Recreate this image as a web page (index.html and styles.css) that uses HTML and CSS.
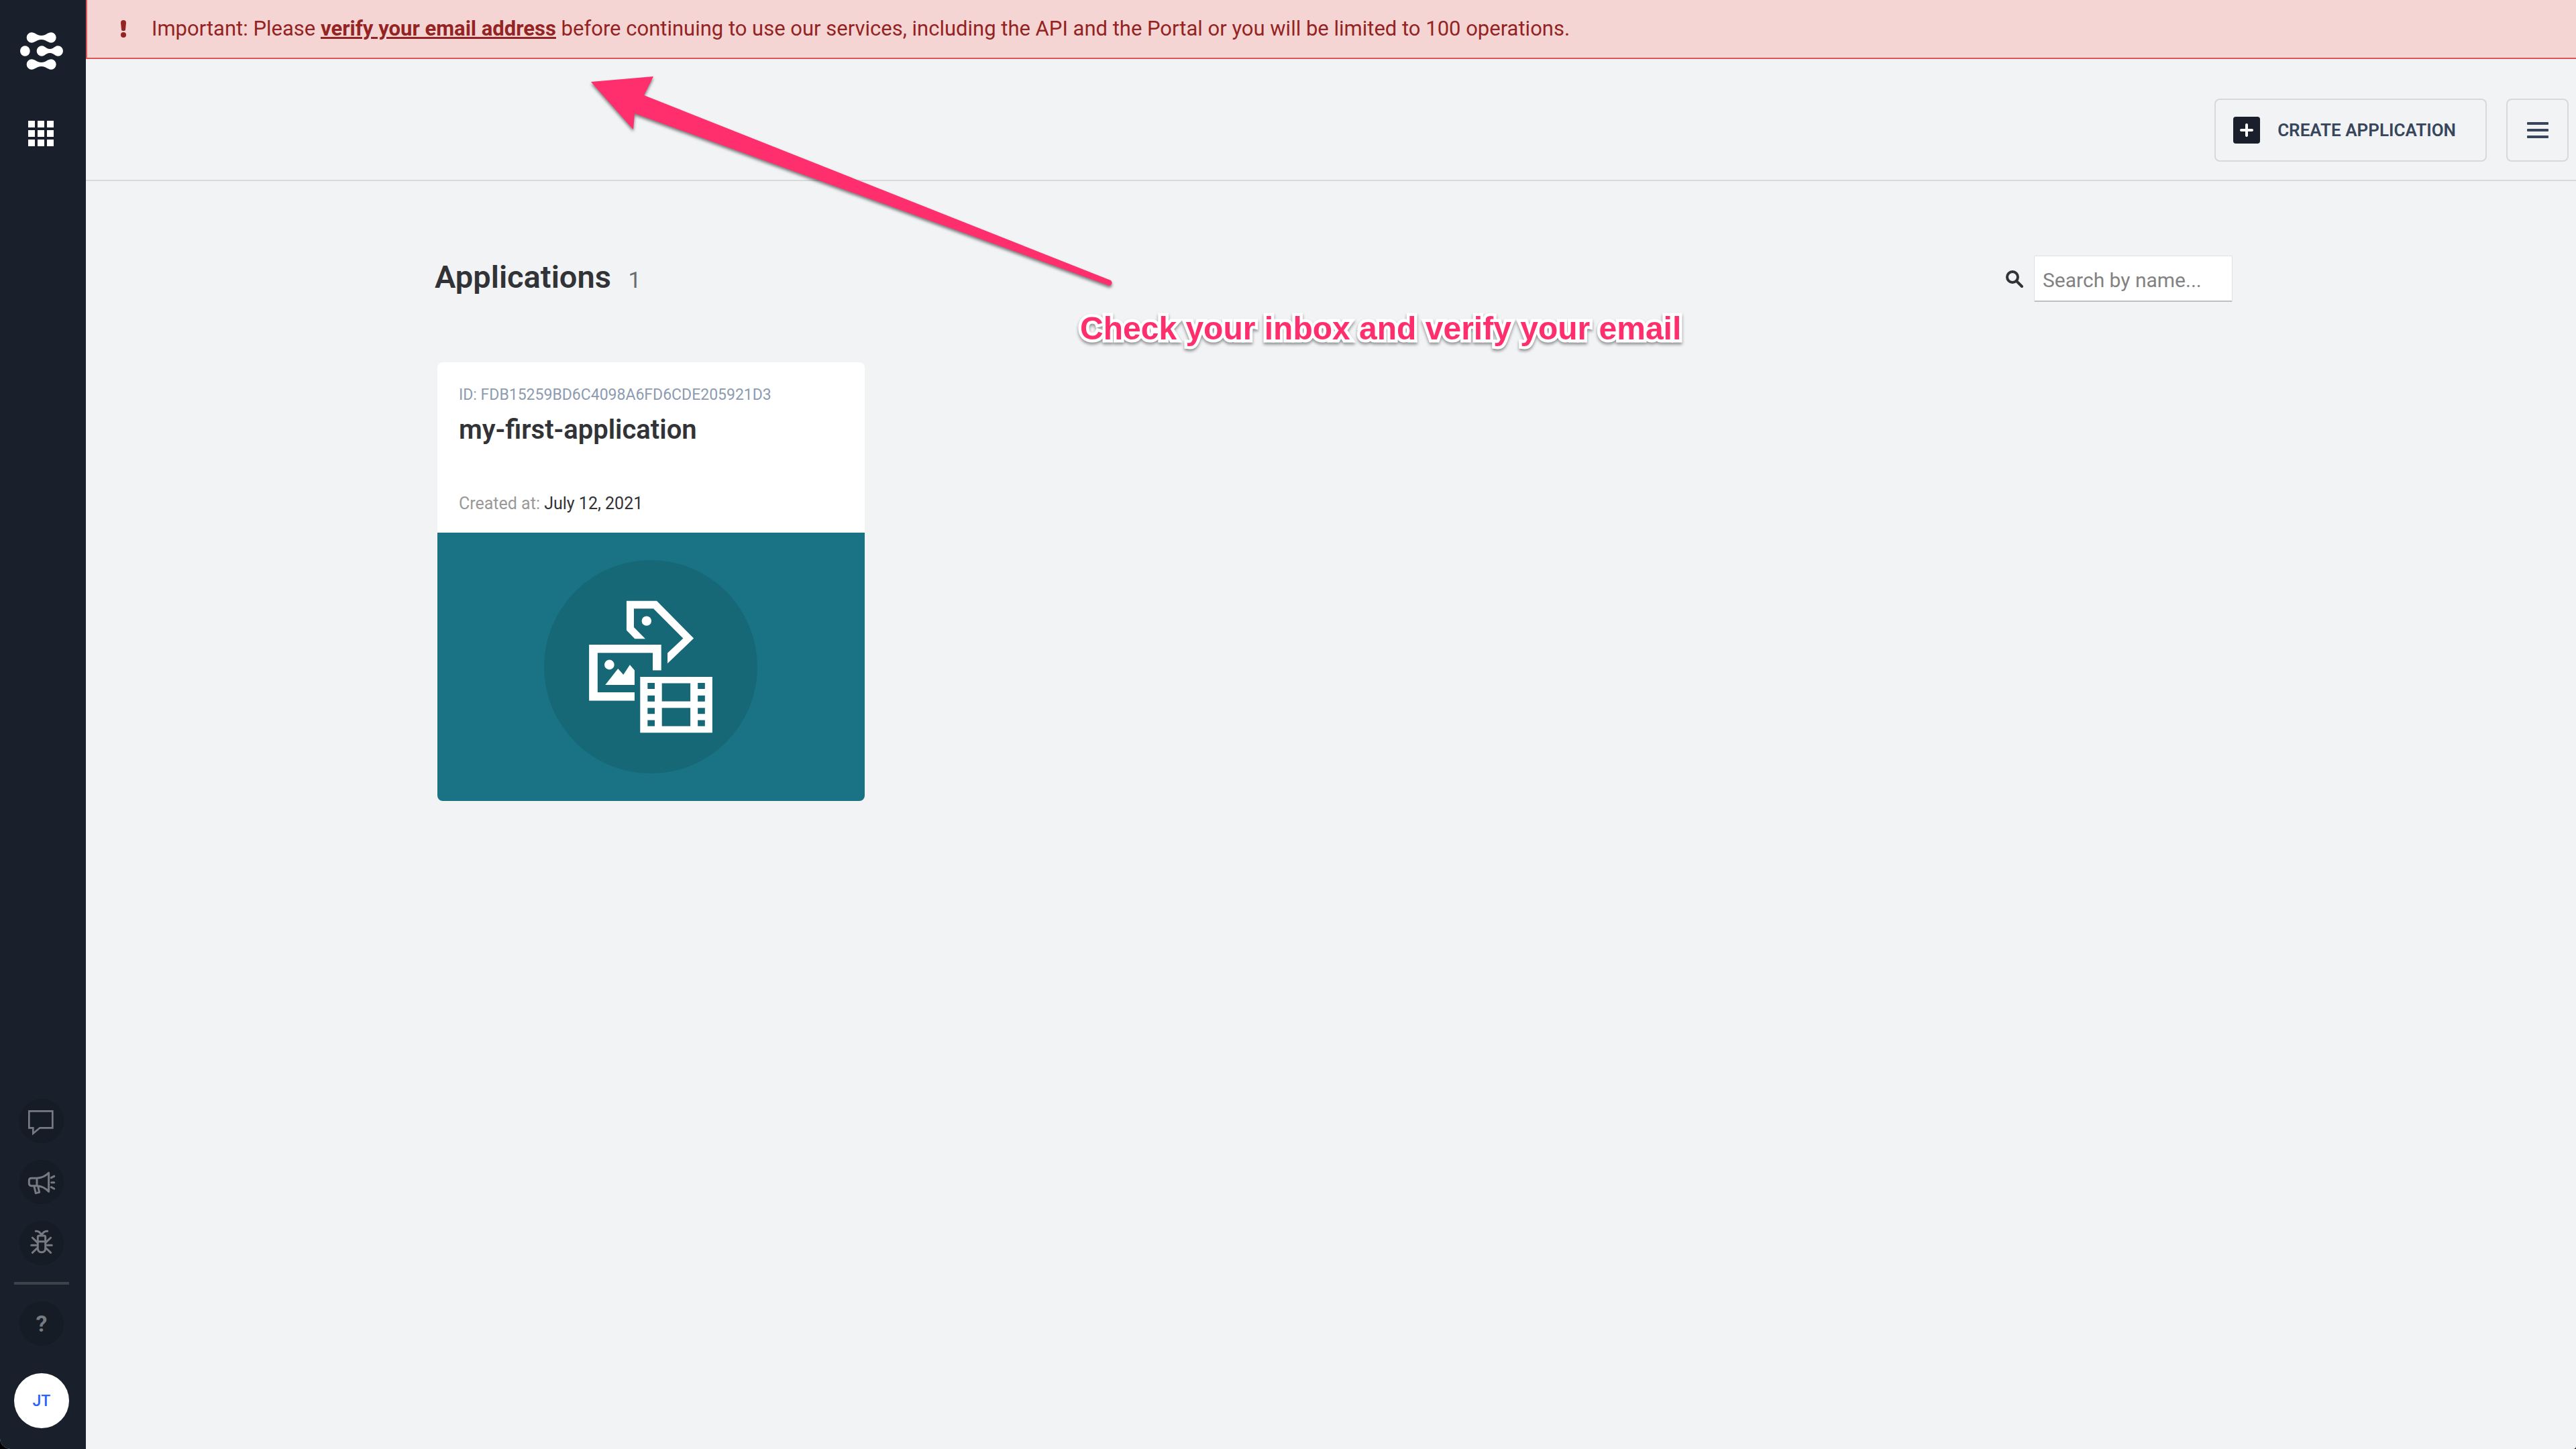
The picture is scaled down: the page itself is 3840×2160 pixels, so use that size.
FILE: index.html
```
<!DOCTYPE html>
<html lang="en">
<head>
<meta charset="utf-8">
<meta name="viewport" content="width=device-width, initial-scale=1">
<title>Applications</title>
<link rel="stylesheet" href="styles.css">
</head>
<body>
<div class="shell">
  <nav class="sidebar" aria-label="Main">
    <a class="sidebar-logo" href="#" aria-label="Home">
      <svg viewBox="0 0 192 168" width="64" height="56" fill="#fff">
        <path id="bone" d="M52 1c10 0 17 7 27 11 10 4 22 4 32 0 10-4 17-11 27-11a23 23 0 0 1 0 46c-10 0-17-7-27-11-10-4-22-4-32 0-10 4-17 11-27 11a23 23 0 0 1 0-46z"/>
        <ellipse cx="22" cy="84" rx="22" ry="23"/>
        <path d="M97 61c10 0 14 6 22 10 10 5 18 5 28 0 8-4 12-10 22-10a23 23 0 0 1 0 46c-10 0-14-6-22-10-10-5-18-5-28 0-8 4-12 10-22 10a23 23 0 0 1 0-46z"/>
        <use href="#bone" y="120"/>
      </svg>
    </a>
    <a class="sidebar-apps" href="#" aria-label="Applications">
      <svg viewBox="0 0 38 38" width="38" height="38" fill="#fff">
        <path d="M0 0h10v10H0zM14 0h10v10H14zM28 0h10v10H28zM0 14h10v10H0zM14 14h10v10H14zM28 14h10v10H28zM0 28h10v10H0zM14 28h10v10H14zM28 28h10v10H28z"/>
      </svg>
    </a>
    <div class="sidebar-tools">
      <button class="tool" type="button" aria-label="Chat">
        <svg viewBox="0 0 198 198" width="66" height="66"><path d="M43 55H148V130H91L61 155V130H43Z"/></svg>
      </button>
      <button class="tool tool-round" type="button" aria-label="Announcements">
        <svg viewBox="0 0 198 198" width="66" height="66"><path d="M78 82H53q-10 0-10 10v14q0 10 10 10H78M78 82q32-2 53-24V142q-21-24-53-26zM66 120l7 29 16-4-6-27M142 80l13-7M143 101h12M142 122l13 7"/></svg>
      </button>
      <button class="tool tool-round" type="button" aria-label="Report a bug">
        <svg viewBox="0 0 198 198" width="66" height="66"><path d="M73 46q14-3 26 16 12-19 26-16M82 92V72q0-6 6-6h22q6 0 6 6V92M82 92h34v30q0 18-17 18t-17-18zM58 75l23 22M53 109h28M58 142l23-22M140 75l-23 22M145 109h-28M140 142l-23-22"/></svg>
      </button>
      <hr class="sidebar-rule">
      <button class="tool" type="button" aria-label="Help">?</button>
      <button class="avatar" type="button" aria-label="Account JT">JT</button>
    </div>
  </nav>

  <div class="main">
    <div class="banner" role="alert">
      <svg class="banner-icon" viewBox="0 0 8 26" width="8" height="26" fill="#942323"><path d="M0 4q0-4 4-4t4 4L7 14q0 2-3 2t-3-2z"/><circle cx="4" cy="22" r="4"/></svg>
      <p class="banner-text">Important: Please <a href="#">verify your email address</a> before continuing to use our services, including the API and the Portal or you will be limited to 100 operations.</p>
    </div>

    <header class="topbar">
      <button class="button button-create" type="button">
        <svg viewBox="0 0 40 40" width="40" height="40"><rect width="40" height="40" rx="4" fill="#191f2b"/><path d="M20 12v16M12 20h16" stroke="#fff" stroke-width="4" stroke-linecap="round"/></svg>
        CREATE APPLICATION
      </button>
      <button class="button button-menu" type="button" aria-label="Menu">
        <svg viewBox="0 0 32 24" width="32" height="24" fill="#37465b"><rect width="32" height="4" rx="1"/><rect y="10" width="32" height="4" rx="1"/><rect y="20" width="32" height="4" rx="1"/></svg>
      </button>
    </header>

    <main class="content">
      <div class="heading">
        <h1 class="title">Applications <span class="count">1</span></h1>
        <div class="search">
          <label for="search" aria-label="Search">
            <svg viewBox="0 0 26 26" width="26" height="26" fill="none" stroke="#323337"><circle cx="10" cy="10" r="8" stroke-width="4"/><path d="M16 16l8 8" stroke-width="4" stroke-linecap="round"/></svg>
          </label>
          <input id="search" type="text" placeholder="Search by name...">
        </div>
      </div>

      <div class="cards">
        <article class="card">
          <div class="card-body">
            <p class="card-id">ID: FDB15259BD6C4098A6FD6CDE205921D3</p>
            <h2 class="card-name">my-first-application</h2>
            <p class="card-date">Created at: <time datetime="2021-07-12">July 12, 2021</time></p>
          </div>
          <div class="card-art">
            <svg viewBox="0 0 952 952" width="318" height="318">
              <circle cx="476" cy="476" r="476" fill="#176876"/>
              <g transform="translate(-34 -106)" fill="#fff" fill-rule="evenodd">
                <path d="M402 288H537L702 455 585 567V521L655 455 522 322H435V405L486 457H439L402 419z"/>
                <circle cx="491.500" cy="377.500" r="21.500"/>
                <path d="M235 483H557V598H519V520H273V696H438V733H235z"/>
                <circle cx="325.500" cy="572.500" r="22"/>
                <path d="M307 663L364 590 388 617 417 573 438 598V663z"/>
                <path d="M463 627H785V876H463zM496 654V681H528V654zM496 710V737H528V710zM496 765V792H528V765zM496 820V847H528V820zM720 654V681H752V654zM720 710V737H752V710zM720 765V792H752V765zM720 820V847H752V820zM560 655V736H687V655zM560 765V847H687V765z"/>
              </g>
            </svg>
          </div>
        </article>
      </div>
    </main>
  </div>

  <div class="callout">
    <svg class="callout-arrow" viewBox="0 0 790 330" width="790" height="330" fill="#ff2f6d">
      <path d="M5 12L98 4 84 32 780 308Q784 313 778 316L70 59 68 83z"/>
    </svg>
    <p class="callout-text">Check your inbox and verify your email</p>
  </div>
</div>
</body>
</html>
```
FILE: styles.css
```
* {
  box-sizing: border-box;
}

html {
  background: #000;
}

body {
  margin: 0;
  font-family: Roboto, "Liberation Sans", sans-serif;
  color: #323337;
}

h1, h2, p {
  margin: 0;
}

svg {
  display: block;
}

button {
  font: inherit;
  padding: 0;
  border: 0;
  cursor: pointer;
}

.shell {
  position: relative;
  display: flex;
  min-height: 100vh;
  background: #f1f3f5;
  border-radius: 0 0 4px 16px;
  overflow: hidden;
}

/* Sidebar */
.sidebar {
  flex: none;
  display: flex;
  flex-direction: column;
  align-items: center;
  width: 128px;
  padding: 48px 4px 31px 0;
  background: #191f2b;
}

.sidebar-apps {
  margin: 76px 2px 0 0;
}

.sidebar-tools {
  display: flex;
  flex-direction: column;
  align-items: center;
  gap: 25px;
  margin-top: auto;
}

.tool {
  width: 66px;
  height: 66px;
  border-radius: 50%;
  background: #151c25;
  color: #767a82;
  font-size: 34px;
  font-weight: 700;
}

.tool svg {
  fill: none;
  stroke: #767a82;
  stroke-width: 8;
}

.tool-round svg {
  stroke-width: 9;
  stroke-linecap: round;
  stroke-linejoin: round;
}

.sidebar-rule {
  width: 82px;
  height: 4px;
  margin: 0;
  border: 0;
  background: #3d434b;
}

.avatar {
  width: 82px;
  height: 82px;
  margin-top: 16px;
  border-radius: 50%;
  background: #fff;
  color: #2962ff;
  font-size: 23px;
  font-weight: 500;
}

/* Main column */
.main {
  flex: 1;
  min-width: 0;
}

.banner {
  display: flex;
  align-items: center;
  gap: 38px;
  padding: 23px 50px;
  border-left: 2px solid #dd5555;
  border-bottom: 2px solid #dd5555;
  background: #f5d5d3;
  color: #942323;
}

.banner-icon {
  flex: none;
}

.banner-text {
  font-size: 31px;
  line-height: 40px;
}

.banner-text a {
  color: inherit;
  font-weight: 700;
}

.topbar {
  display: flex;
  justify-content: flex-end;
  gap: 29px;
  padding: 59px 11px 27px;
  border-bottom: 2px solid #d7d9dc;
}

.button {
  display: flex;
  align-items: center;
  justify-content: center;
  height: 94px;
  border: 2px solid #d7d9dc;
  border-radius: 8px;
  background: transparent;
  color: #37465b;
}

.button-create {
  gap: 26px;
  padding: 0 44px 0 26px;
  font-size: 26px;
  font-weight: 600;
}

.button-menu {
  width: 93px;
}

.content {
  padding: 111px 512px 80px 520px;
}

.heading {
  display: flex;
  align-items: center;
  justify-content: space-between;
}

.title {
  padding-bottom: 6px;
  font-size: 47px;
  line-height: 60px;
  font-weight: 600;
}

.count {
  margin-left: 14px;
  color: #6b6c70;
  font-size: 34px;
  line-height: 34px;
  font-weight: 400;
}

.search {
  display: flex;
  align-items: center;
  gap: 16px;
}

.search input {
  width: 296px;
  height: 69px;
  padding: 4px 12px 0;
  border: 1px solid #dfe0e2;
  border-bottom: 2px solid #c0c0c0;
  border-radius: 2px;
  background: #fff;
  color: #323337;
  font: 30px Roboto, "Liberation Sans", sans-serif;
}

.search input::placeholder {
  color: #828282;
  opacity: 1;
}

/* Application cards */
.cards {
  display: grid;
  grid-template-columns: repeat(4, 1fr);
  gap: 42px;
  padding: 0 4px;
  margin-top: 90px;
}

.card {
  border-radius: 8px;
  overflow: hidden;
  background: #fff;
}

.card-body {
  padding: 35px 32px 27px;
}

.card-id {
  color: #8c9bb0;
  font-size: 23px;
  line-height: 28px;
}

.card-name {
  margin-top: 14px;
  font-size: 40px;
  line-height: 48px;
  font-weight: 600;
}

.card-date {
  margin-top: 70px;
  color: #999;
  font-size: 25px;
  line-height: 32px;
}

.card-date time {
  color: #323337;
}

.card-art {
  display: flex;
  align-items: center;
  justify-content: center;
  height: 400px;
  background: #197384;
}

/* Callout drawn over the page */
.callout {
  position: absolute;
  top: 110px;
  left: 876px;
  pointer-events: none;
}

.callout-arrow {
  filter: drop-shadow(0 3px 2px rgba(0, 0, 0, 0.5));
}

.callout-text {
  margin: 20px 0 0 734px;
  color: #ff2f6d;
  font: 700 48px/60px "Liberation Sans", Arial, sans-serif;
  white-space: nowrap;
  -webkit-text-stroke: 9px #fff;
  paint-order: stroke fill;
  stroke-linejoin: round;
  filter: drop-shadow(0 3px 2px rgba(0, 0, 0, 0.4));
}
```
